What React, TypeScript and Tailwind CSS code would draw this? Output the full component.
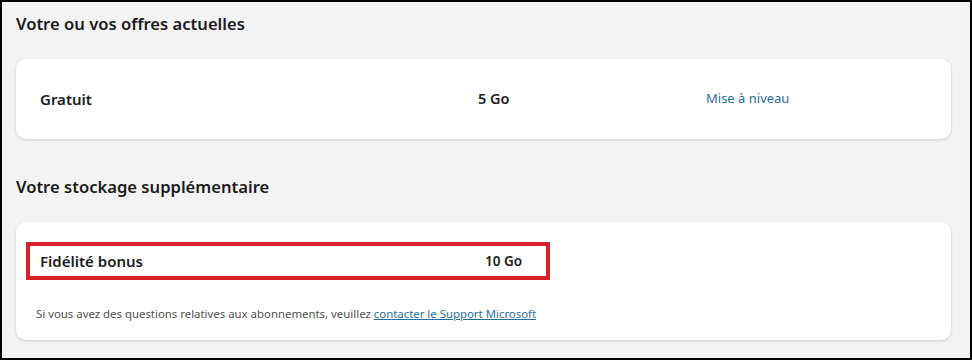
import React from 'react';

const font = { fontFamily: '"Noto Sans", "Open Sans", sans-serif' };

const App = () => {
    return (
        <div
            style={font}
            className="w-[972px] h-[360px] border-2 border-black bg-[#f3f3f3] pl-[14px] pt-[10px] text-[#1b1b1b] overflow-hidden"
        >
            {/* Current offers */}
            <h2 className="h-[24px] leading-[24px] text-[16.6px] font-semibold">Votre ou vos offres actuelles</h2>
            <div className="mt-[23px] w-[935px] h-[80px] bg-white rounded-[10px] shadow-[0_1px_3px_rgba(0,0,0,0.16)] flex items-center pl-[24px]">
                <div className="w-[438px] text-[15px] font-semibold">Gratuit</div>
                <div className="w-[228px] text-[14.5px] font-semibold">5 Go</div>
                <a href="#" className="text-[13px] text-[#1f6fa3]">Mise à niveau</a>
            </div>

            {/* Extra storage */}
            <h2 className="mt-[36px] h-[24px] leading-[24px] text-[16.6px] font-semibold">Votre stockage supplémentaire</h2>
            <div className="mt-[23px] w-[935px] bg-white rounded-[10px] shadow-[0_1px_3px_rgba(0,0,0,0.16)] pt-[20px] pb-[17px] pl-[10px]">
                <div className="w-[524px] h-[38px] border-4 border-[#d7202c] flex items-center pl-[10px] font-semibold">
                    <div className="w-[445px] text-[15px]">Fidélité bonus</div>
                    <div className="text-[13.5px]">10 Go</div>
                </div>
                <p className="mt-[25px] pl-[10px] h-[18px] leading-[18px] text-[11.4px] text-[#4f4f4f]">
                    Si vous avez des questions relatives aux abonnements, veuillez{' '}
                    <a href="#" className="text-[#1f6fa3] underline">contacter le Support Microsoft</a>
                </p>
            </div>
        </div>
    );
};

export default App;
